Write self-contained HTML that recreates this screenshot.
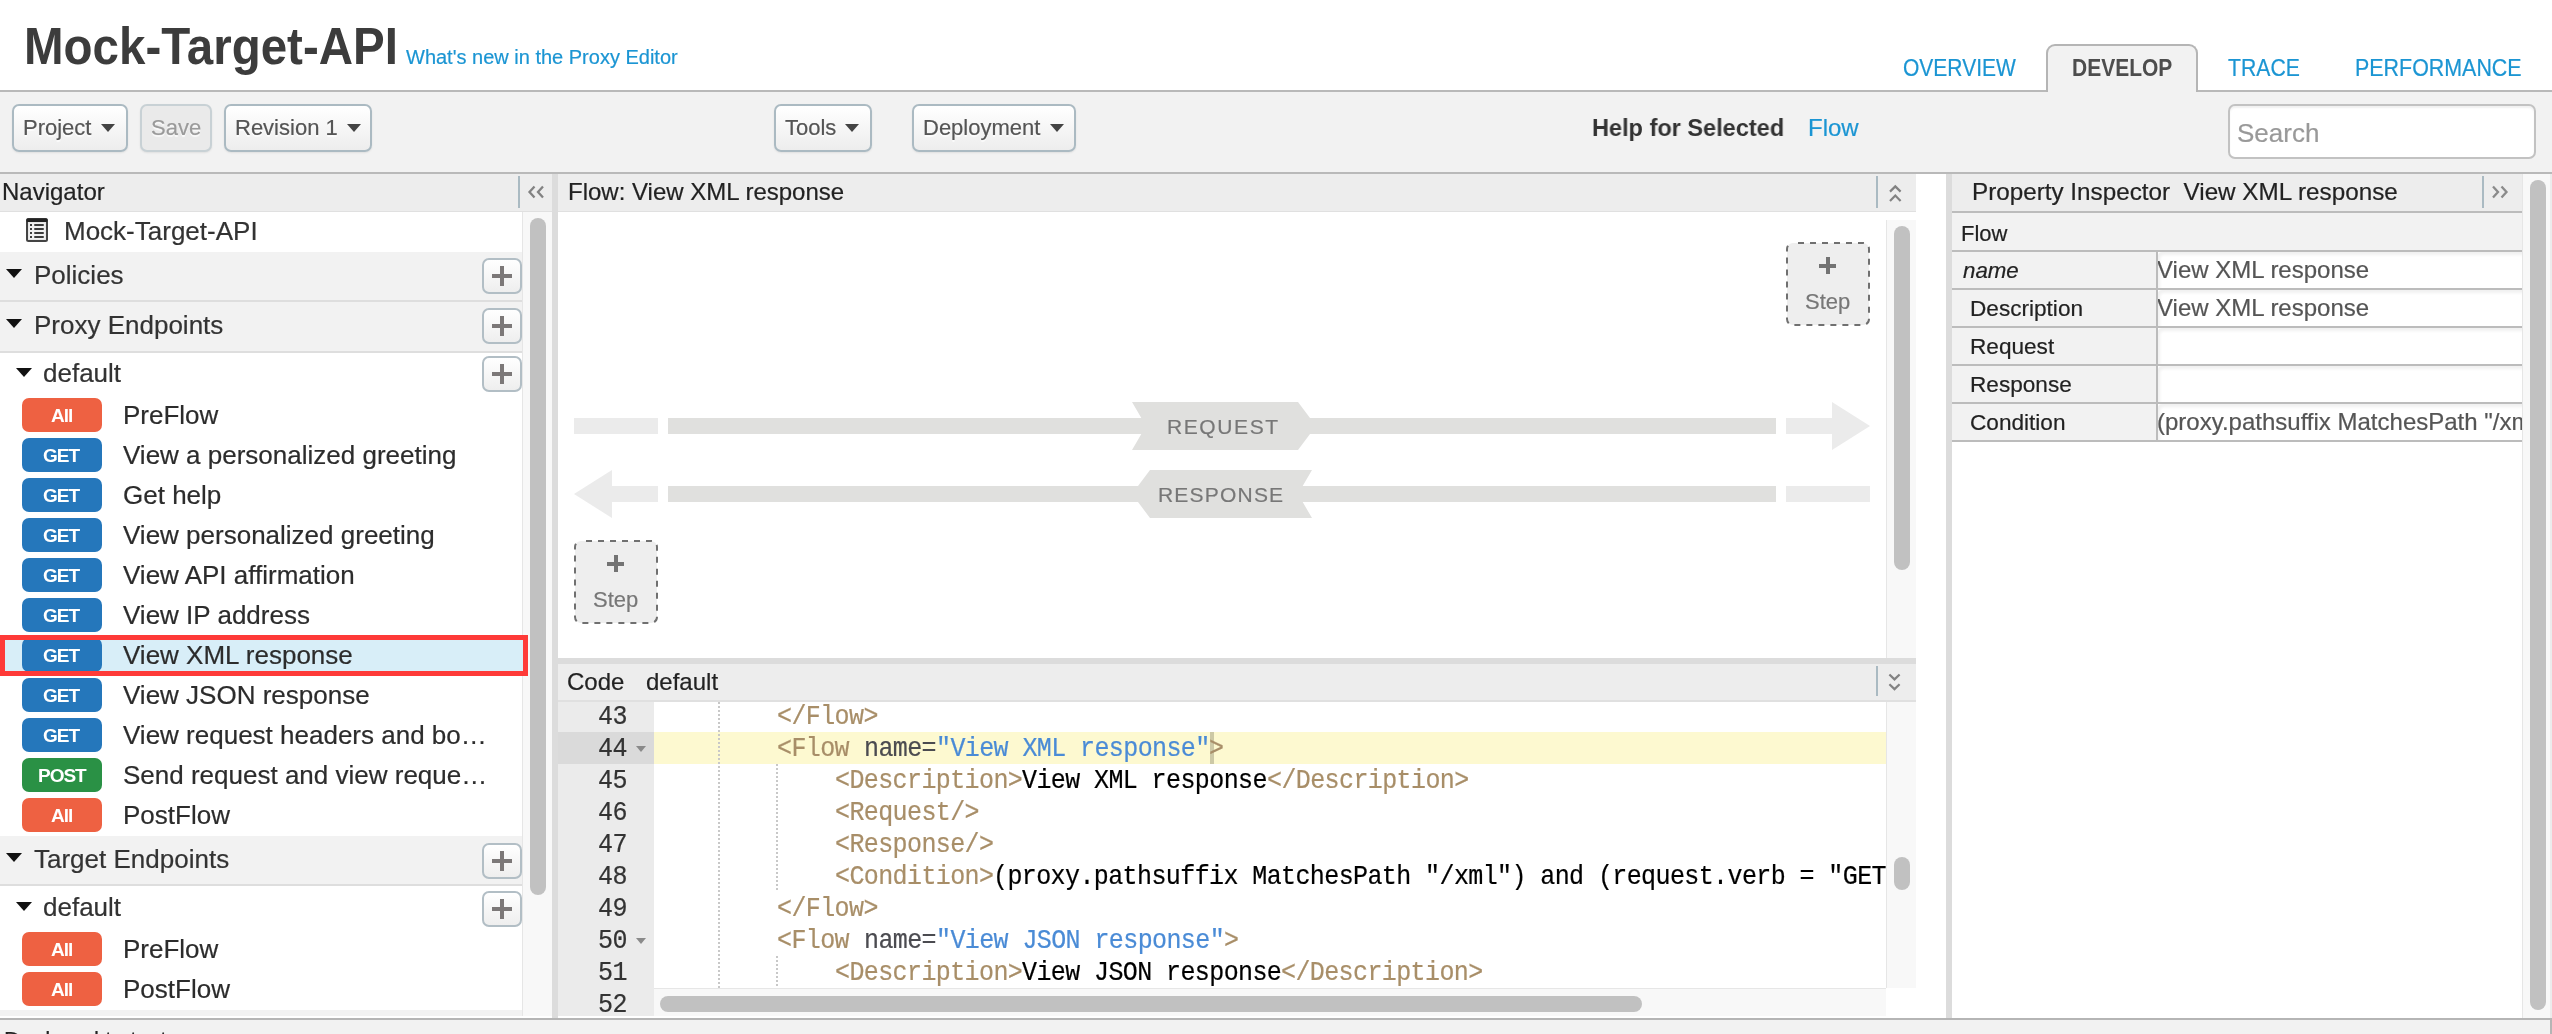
<!DOCTYPE html>
<html><head><meta charset="utf-8"><title>Mock-Target-API</title>
<style>
html,body{margin:0;padding:0;}
body{width:2552px;height:1034px;overflow:hidden;position:relative;background:#fff;font-family:"Liberation Sans", sans-serif;}
.t{position:absolute;white-space:nowrap;will-change:transform;}
.r{position:absolute;}
</style></head><body>
<div class="t" style="left:23.70px;top:16.53px;font-size:47.5px;line-height:62px;color:#3c3c3c;font-family:'Liberation Sans', sans-serif;font-weight:bold;transform:scale(1,1.09);transform-origin:0 47.47px;">Mock-Target-API</div>
<div class="t" style="left:405.70px;top:43.67px;font-size:20px;line-height:26px;color:#1b95d3;font-family:'Liberation Sans', sans-serif;-webkit-text-stroke:0.2px #1b95d3;">What&#x27;s new in the Proxy Editor</div>
<div class="r" style="left:0px;top:90px;width:2552px;height:2px;background:#b9b9b9;"></div>
<div class="r" style="left:2046px;top:44px;width:148px;height:48px;border:2px solid #b5b5b5;border-bottom:none;border-radius:9px 9px 0 0;background:#f2f2f2;"></div>
<div class="t" style="left:1903.40px;top:55.02px;font-size:21px;line-height:27px;color:#1b95d3;font-family:'Liberation Sans', sans-serif;transform:scale(1,1.14);transform-origin:0 20.78px;-webkit-text-stroke:0.2px #1b95d3;">OVERVIEW</div>
<div class="t" style="left:2071.70px;top:55.02px;font-size:21px;line-height:27px;color:#4d4d4d;font-family:'Liberation Sans', sans-serif;font-weight:bold;transform:scale(1,1.14);transform-origin:0 20.78px;">DEVELOP</div>
<div class="t" style="left:2228.20px;top:55.02px;font-size:21px;line-height:27px;color:#1b95d3;font-family:'Liberation Sans', sans-serif;transform:scale(1.01,1.14);transform-origin:0 20.78px;-webkit-text-stroke:0.2px #1b95d3;">TRACE</div>
<div class="t" style="left:2355.20px;top:55.02px;font-size:21px;line-height:27px;color:#1b95d3;font-family:'Liberation Sans', sans-serif;transform:scale(1.02,1.14);transform-origin:0 20.78px;-webkit-text-stroke:0.2px #1b95d3;">PERFORMANCE</div>
<div class="r" style="left:0px;top:92px;width:2552px;height:80px;background:#f2f2f2;"></div>
<div class="r" style="left:0px;top:172px;width:2552px;height:2px;background:#b9b9b9;"></div>
<div class="r" style="left:12px;top:104px;width:112px;height:44px;border:2px solid #abbac2;border-radius:7px;background:linear-gradient(#ffffff,#ededed);box-shadow:0 1px 2px rgba(0,0,0,0.08);"></div><div class="t" style="left:23.20px;top:113.27px;font-size:22px;line-height:29px;color:#555;font-family:'Liberation Sans', sans-serif;-webkit-text-stroke:0.2px #555;text-shadow:0 1.5px 1px rgba(255,255,255,0.8);">Project</div><div class="r" style="left:100.5px;top:124px;width:0;height:0;border-left:7.5px solid transparent;border-right:7.5px solid transparent;border-top:8px solid #444;"></div>
<div class="r" style="left:140px;top:104px;width:68px;height:44px;border:2px solid #c8d1d5;border-radius:7px;background:#eaeaea;box-shadow:0 1px 2px rgba(0,0,0,0.08);"></div><div class="t" style="left:151.20px;top:113.27px;font-size:22px;line-height:29px;color:#9a9a9a;font-family:'Liberation Sans', sans-serif;-webkit-text-stroke:0.2px #9a9a9a;text-shadow:0 1.5px 1px rgba(255,255,255,0.8);">Save</div>
<div class="r" style="left:224px;top:104px;width:144px;height:44px;border:2px solid #abbac2;border-radius:7px;background:linear-gradient(#ffffff,#ededed);box-shadow:0 1px 2px rgba(0,0,0,0.08);"></div><div class="t" style="left:235.20px;top:113.27px;font-size:22px;line-height:29px;color:#555;font-family:'Liberation Sans', sans-serif;-webkit-text-stroke:0.2px #555;text-shadow:0 1.5px 1px rgba(255,255,255,0.8);">Revision 1</div><div class="r" style="left:346.8px;top:124px;width:0;height:0;border-left:7.5px solid transparent;border-right:7.5px solid transparent;border-top:8px solid #444;"></div>
<div class="r" style="left:774px;top:104px;width:94px;height:44px;border:2px solid #abbac2;border-radius:7px;background:linear-gradient(#ffffff,#ededed);box-shadow:0 1px 2px rgba(0,0,0,0.08);"></div><div class="t" style="left:785.20px;top:113.27px;font-size:22px;line-height:29px;color:#555;font-family:'Liberation Sans', sans-serif;-webkit-text-stroke:0.2px #555;text-shadow:0 1.5px 1px rgba(255,255,255,0.8);">Tools</div><div class="r" style="left:845.2px;top:124px;width:0;height:0;border-left:7.5px solid transparent;border-right:7.5px solid transparent;border-top:8px solid #444;"></div>
<div class="r" style="left:912px;top:104px;width:160px;height:44px;border:2px solid #abbac2;border-radius:7px;background:linear-gradient(#ffffff,#ededed);box-shadow:0 1px 2px rgba(0,0,0,0.08);"></div><div class="t" style="left:923.20px;top:113.27px;font-size:22px;line-height:29px;color:#555;font-family:'Liberation Sans', sans-serif;-webkit-text-stroke:0.2px #555;text-shadow:0 1.5px 1px rgba(255,255,255,0.8);">Deployment</div><div class="r" style="left:1049.5px;top:124px;width:0;height:0;border-left:7.5px solid transparent;border-right:7.5px solid transparent;border-top:8px solid #444;"></div>
<div class="t" style="left:1591.90px;top:112.18px;font-size:24px;line-height:31px;color:#333;font-family:'Liberation Sans', sans-serif;font-weight:bold;transform:scale(0.98,1);transform-origin:0 23.82px;">Help for Selected</div>
<div class="t" style="left:1807.70px;top:112.18px;font-size:24px;line-height:31px;color:#1b95d3;font-family:'Liberation Sans', sans-serif;-webkit-text-stroke:0.2px #1b95d3;">Flow</div>
<div class="r" style="left:2228px;top:104px;width:304px;height:51px;border:2px solid #c2c2c2;border-radius:7px;background:#fff;box-shadow:inset 0 2px 2px rgba(0,0,0,0.06);"></div>
<div class="t" style="left:2237.30px;top:115.99px;font-size:26px;line-height:34px;color:#999;font-family:'Liberation Sans', sans-serif;-webkit-text-stroke:0.2px #999;">Search</div>
<div class="r" style="left:0px;top:174px;width:552px;height:37px;background:#ededed;"></div>
<div class="r" style="left:0px;top:211px;width:552px;height:1px;background:#e0e0e0;"></div>
<div class="t" style="left:2.00px;top:176.18px;font-size:24px;line-height:31px;color:#222;font-family:'Liberation Sans', sans-serif;-webkit-text-stroke:0.2px #222;">Navigator</div>
<div class="r" style="left:518px;top:176px;width:2px;height:32px;background:#aabac2;"></div>
<svg class="r" style="left:526px;top:184px" width="22" height="16" viewBox="0 0 22 16"><path d="M8.5 2.5 L3.5 8 L8.5 13.5 M17 2.5 L12 8 L17 13.5" stroke="#828282" stroke-width="2.3" fill="none"/></svg>
<div class="r" style="left:0px;top:212px;width:522px;height:804px;background:#fff;"></div>
<div class="r" style="left:522px;top:212px;width:30px;height:804px;background:#f8f8f8;border-left:1px solid #e6e6e6;box-sizing:border-box;"></div>
<div class="r" style="left:530px;top:218px;width:16px;height:677px;background:#c1c1c1;border-radius:8px;"></div>
<div class="r" style="left:552px;top:174px;width:6px;height:844px;background:#dcdcdc;"></div>
<svg class="r" style="left:26px;top:218px" width="22" height="24" viewBox="0 0 22 24"><rect x="1" y="1" width="20" height="22" rx="1.5" fill="#e6e6e6" stroke="#444" stroke-width="2"/><rect x="3" y="5" width="16" height="16" fill="#f0f0f0"/><rect x="0.5" y="0.5" width="21" height="3.5" rx="1.2" fill="#222"/><g fill="#3c3c3c"><rect x="4" y="6" width="2" height="2"/><rect x="4" y="10" width="2" height="2"/><rect x="4" y="14" width="2" height="2"/><rect x="4" y="18" width="2" height="2"/><rect x="8" y="6" width="10" height="2" rx="1"/><rect x="8" y="10" width="10" height="2" rx="1"/><rect x="8" y="14" width="10" height="2" rx="1"/><rect x="8" y="18" width="10" height="2" rx="1"/></g></svg>
<div class="t" style="left:64.00px;top:214.49px;font-size:26px;line-height:34px;color:#333;font-family:'Liberation Sans', sans-serif;-webkit-text-stroke:0.2px #333;">Mock-Target-API</div>
<div class="r" style="left:0px;top:252px;width:522px;height:48px;background:#f2f2f2;"></div><div class="r" style="left:0px;top:300px;width:522px;height:2px;background:#dedede;"></div><div class="r" style="left:6px;top:269px;width:0;height:0;border-left:8px solid transparent;border-right:8px solid transparent;border-top:9px solid #111;"></div><div class="t" style="left:33.90px;top:257.99px;font-size:26px;line-height:34px;color:#333;font-family:'Liberation Sans', sans-serif;-webkit-text-stroke:0.2px #333;">Policies</div><div class="r" style="left:482px;top:258px;width:36px;height:32px;border:2px solid #b2bec5;border-radius:7px;background:linear-gradient(#fff,#eee);"></div><div class="r" style="left:492px;top:274px;width:20px;height:4px;background:#7c7878;"></div><div class="r" style="left:500px;top:266px;width:4px;height:20px;background:#7c7878;"></div>
<div class="r" style="left:0px;top:302px;width:522px;height:49px;background:#f2f2f2;"></div><div class="r" style="left:0px;top:351px;width:522px;height:2px;background:#dedede;"></div><div class="r" style="left:6px;top:319px;width:0;height:0;border-left:8px solid transparent;border-right:8px solid transparent;border-top:9px solid #111;"></div><div class="t" style="left:33.90px;top:307.99px;font-size:26px;line-height:34px;color:#333;font-family:'Liberation Sans', sans-serif;-webkit-text-stroke:0.2px #333;">Proxy Endpoints</div><div class="r" style="left:482px;top:308px;width:36px;height:32px;border:2px solid #b2bec5;border-radius:7px;background:linear-gradient(#fff,#eee);"></div><div class="r" style="left:492px;top:324px;width:20px;height:4px;background:#7c7878;"></div><div class="r" style="left:500px;top:316px;width:4px;height:20px;background:#7c7878;"></div>
<div class="r" style="left:16px;top:368px;width:0;height:0;border-left:8px solid transparent;border-right:8px solid transparent;border-top:9px solid #111;"></div>
<div class="t" style="left:43.40px;top:355.59px;font-size:26px;line-height:34px;color:#333;font-family:'Liberation Sans', sans-serif;-webkit-text-stroke:0.2px #333;">default</div>
<div class="r" style="left:482px;top:356px;width:36px;height:32px;border:2px solid #b2bec5;border-radius:7px;background:linear-gradient(#fff,#eee);"></div><div class="r" style="left:492px;top:372px;width:20px;height:4px;background:#7c7878;"></div><div class="r" style="left:500px;top:364px;width:4px;height:20px;background:#7c7878;"></div>
<div class="r" style="left:22px;top:398px;width:80px;height:34px;border-radius:7px;background:#ee6142;"></div><div class="t" style="left:50.78px;top:403.21px;font-size:19px;line-height:25px;color:#fff;font-family:'Liberation Sans', sans-serif;font-weight:bold;letter-spacing:-1.0px;">All</div><div class="t" style="left:122.50px;top:398.19px;font-size:26px;line-height:34px;color:#2c2c2c;font-family:'Liberation Sans', sans-serif;-webkit-text-stroke:0.2px #2c2c2c;">PreFlow</div>
<div class="r" style="left:22px;top:438px;width:80px;height:34px;border-radius:7px;background:#2577bb;"></div><div class="t" style="left:43.40px;top:443.21px;font-size:19px;line-height:25px;color:#fff;font-family:'Liberation Sans', sans-serif;font-weight:bold;letter-spacing:-1.0px;">GET</div><div class="t" style="left:122.50px;top:438.19px;font-size:26px;line-height:34px;color:#2c2c2c;font-family:'Liberation Sans', sans-serif;-webkit-text-stroke:0.2px #2c2c2c;">View a personalized greeting</div>
<div class="r" style="left:22px;top:478px;width:80px;height:34px;border-radius:7px;background:#2577bb;"></div><div class="t" style="left:43.40px;top:483.21px;font-size:19px;line-height:25px;color:#fff;font-family:'Liberation Sans', sans-serif;font-weight:bold;letter-spacing:-1.0px;">GET</div><div class="t" style="left:122.50px;top:478.19px;font-size:26px;line-height:34px;color:#2c2c2c;font-family:'Liberation Sans', sans-serif;-webkit-text-stroke:0.2px #2c2c2c;">Get help</div>
<div class="r" style="left:22px;top:518px;width:80px;height:34px;border-radius:7px;background:#2577bb;"></div><div class="t" style="left:43.40px;top:523.21px;font-size:19px;line-height:25px;color:#fff;font-family:'Liberation Sans', sans-serif;font-weight:bold;letter-spacing:-1.0px;">GET</div><div class="t" style="left:122.50px;top:518.19px;font-size:26px;line-height:34px;color:#2c2c2c;font-family:'Liberation Sans', sans-serif;-webkit-text-stroke:0.2px #2c2c2c;">View personalized greeting</div>
<div class="r" style="left:22px;top:558px;width:80px;height:34px;border-radius:7px;background:#2577bb;"></div><div class="t" style="left:43.40px;top:563.21px;font-size:19px;line-height:25px;color:#fff;font-family:'Liberation Sans', sans-serif;font-weight:bold;letter-spacing:-1.0px;">GET</div><div class="t" style="left:122.50px;top:558.19px;font-size:26px;line-height:34px;color:#2c2c2c;font-family:'Liberation Sans', sans-serif;-webkit-text-stroke:0.2px #2c2c2c;">View API affirmation</div>
<div class="r" style="left:22px;top:598px;width:80px;height:34px;border-radius:7px;background:#2577bb;"></div><div class="t" style="left:43.40px;top:603.21px;font-size:19px;line-height:25px;color:#fff;font-family:'Liberation Sans', sans-serif;font-weight:bold;letter-spacing:-1.0px;">GET</div><div class="t" style="left:122.50px;top:598.19px;font-size:26px;line-height:34px;color:#2c2c2c;font-family:'Liberation Sans', sans-serif;-webkit-text-stroke:0.2px #2c2c2c;">View IP address</div>
<div class="r" style="left:0px;top:635px;width:528px;height:41px;background:#d8eef8;"></div><div class="r" style="left:22px;top:638px;width:80px;height:34px;border-radius:7px;background:#2577bb;"></div><div class="t" style="left:43.40px;top:643.21px;font-size:19px;line-height:25px;color:#fff;font-family:'Liberation Sans', sans-serif;font-weight:bold;letter-spacing:-1.0px;">GET</div><div class="t" style="left:122.50px;top:638.19px;font-size:26px;line-height:34px;color:#2c2c2c;font-family:'Liberation Sans', sans-serif;-webkit-text-stroke:0.2px #2c2c2c;">View XML response</div><div class="r" style="left:0px;top:635px;width:528px;height:41px;border:5px solid #fe3a38;box-sizing:border-box;"></div>
<div class="r" style="left:22px;top:678px;width:80px;height:34px;border-radius:7px;background:#2577bb;"></div><div class="t" style="left:43.40px;top:683.21px;font-size:19px;line-height:25px;color:#fff;font-family:'Liberation Sans', sans-serif;font-weight:bold;letter-spacing:-1.0px;">GET</div><div class="t" style="left:122.50px;top:678.19px;font-size:26px;line-height:34px;color:#2c2c2c;font-family:'Liberation Sans', sans-serif;-webkit-text-stroke:0.2px #2c2c2c;">View JSON response</div>
<div class="r" style="left:22px;top:718px;width:80px;height:34px;border-radius:7px;background:#2577bb;"></div><div class="t" style="left:43.40px;top:723.21px;font-size:19px;line-height:25px;color:#fff;font-family:'Liberation Sans', sans-serif;font-weight:bold;letter-spacing:-1.0px;">GET</div><div class="t" style="left:122.50px;top:718.19px;font-size:26px;line-height:34px;color:#2c2c2c;font-family:'Liberation Sans', sans-serif;-webkit-text-stroke:0.2px #2c2c2c;">View request headers and bo…</div>
<div class="r" style="left:22px;top:758px;width:80px;height:34px;border-radius:7px;background:#2a9145;"></div><div class="t" style="left:37.53px;top:763.21px;font-size:19px;line-height:25px;color:#fff;font-family:'Liberation Sans', sans-serif;font-weight:bold;letter-spacing:-1.0px;">POST</div><div class="t" style="left:122.50px;top:758.19px;font-size:26px;line-height:34px;color:#2c2c2c;font-family:'Liberation Sans', sans-serif;-webkit-text-stroke:0.2px #2c2c2c;">Send request and view reque…</div>
<div class="r" style="left:22px;top:798px;width:80px;height:34px;border-radius:7px;background:#ee6142;"></div><div class="t" style="left:50.78px;top:803.21px;font-size:19px;line-height:25px;color:#fff;font-family:'Liberation Sans', sans-serif;font-weight:bold;letter-spacing:-1.0px;">All</div><div class="t" style="left:122.50px;top:798.19px;font-size:26px;line-height:34px;color:#2c2c2c;font-family:'Liberation Sans', sans-serif;-webkit-text-stroke:0.2px #2c2c2c;">PostFlow</div>
<div class="r" style="left:0px;top:836px;width:522px;height:48px;background:#f2f2f2;"></div><div class="r" style="left:0px;top:884px;width:522px;height:2px;background:#dedede;"></div><div class="r" style="left:6px;top:853px;width:0;height:0;border-left:8px solid transparent;border-right:8px solid transparent;border-top:9px solid #111;"></div><div class="t" style="left:33.90px;top:841.99px;font-size:26px;line-height:34px;color:#333;font-family:'Liberation Sans', sans-serif;-webkit-text-stroke:0.2px #333;">Target Endpoints</div><div class="r" style="left:482px;top:843px;width:36px;height:32px;border:2px solid #b2bec5;border-radius:7px;background:linear-gradient(#fff,#eee);"></div><div class="r" style="left:492px;top:859px;width:20px;height:4px;background:#7c7878;"></div><div class="r" style="left:500px;top:851px;width:4px;height:20px;background:#7c7878;"></div>
<div class="r" style="left:16px;top:902px;width:0;height:0;border-left:8px solid transparent;border-right:8px solid transparent;border-top:9px solid #111;"></div>
<div class="t" style="left:43.40px;top:889.59px;font-size:26px;line-height:34px;color:#333;font-family:'Liberation Sans', sans-serif;-webkit-text-stroke:0.2px #333;">default</div>
<div class="r" style="left:482px;top:891px;width:36px;height:32px;border:2px solid #b2bec5;border-radius:7px;background:linear-gradient(#fff,#eee);"></div><div class="r" style="left:492px;top:907px;width:20px;height:4px;background:#7c7878;"></div><div class="r" style="left:500px;top:899px;width:4px;height:20px;background:#7c7878;"></div>
<div class="r" style="left:22px;top:932px;width:80px;height:34px;border-radius:7px;background:#ee6142;"></div><div class="t" style="left:50.78px;top:937.21px;font-size:19px;line-height:25px;color:#fff;font-family:'Liberation Sans', sans-serif;font-weight:bold;letter-spacing:-1.0px;">All</div><div class="t" style="left:122.50px;top:932.19px;font-size:26px;line-height:34px;color:#2c2c2c;font-family:'Liberation Sans', sans-serif;-webkit-text-stroke:0.2px #2c2c2c;">PreFlow</div>
<div class="r" style="left:22px;top:972px;width:80px;height:34px;border-radius:7px;background:#ee6142;"></div><div class="t" style="left:50.78px;top:977.21px;font-size:19px;line-height:25px;color:#fff;font-family:'Liberation Sans', sans-serif;font-weight:bold;letter-spacing:-1.0px;">All</div><div class="t" style="left:122.50px;top:972.19px;font-size:26px;line-height:34px;color:#2c2c2c;font-family:'Liberation Sans', sans-serif;-webkit-text-stroke:0.2px #2c2c2c;">PostFlow</div>
<div class="r" style="left:0px;top:1010px;width:522px;height:6px;background:#f2f2f2;"></div>
<div class="r" style="left:558px;top:174px;width:1358px;height:37px;background:#ededed;"></div>
<div class="r" style="left:558px;top:211px;width:1358px;height:1px;background:#e0e0e0;"></div>
<div class="t" style="left:567.50px;top:176.18px;font-size:24px;line-height:31px;color:#222;font-family:'Liberation Sans', sans-serif;-webkit-text-stroke:0.2px #222;">Flow: View XML response</div>
<div class="r" style="left:1876px;top:176px;width:2px;height:32px;background:#aabac2;"></div>
<svg class="r" style="left:1887px;top:184px" width="16" height="20" viewBox="0 0 16 20"><path d="M3 7.6 L8.3 2.4 L13.6 7.6 M3 17 L8.3 11.6 L13.6 17" stroke="#828282" stroke-width="2.2" fill="none"/></svg>
<div class="r" style="left:1916px;top:174px;width:30px;height:844px;background:#fff;"></div>
<div class="r" style="left:1946px;top:174px;width:6px;height:844px;background:#dcdcdc;"></div>
<div class="r" style="left:558px;top:212px;width:1328px;height:446px;background:#fff;"></div>
<div class="r" style="left:1886px;top:220px;width:30px;height:438px;background:#f8f8f8;border-left:1px solid #e6e6e6;box-sizing:border-box;"></div>
<div class="r" style="left:1894px;top:226px;width:16px;height:344px;background:#c1c1c1;border-radius:8px;"></div>
<svg class="r" style="left:1786px;top:242px" width="84" height="84" viewBox="0 0 84 84"><rect x="1" y="1" width="82" height="82" rx="6" fill="#eeeeee" stroke="#707070" stroke-width="2" stroke-dasharray="6 6" stroke-dashoffset="7"/></svg><div class="r" style="left:1819px;top:264px;width:17px;height:4px;background:#737373;"></div><div class="r" style="left:1825.8px;top:257px;width:4.0px;height:17px;background:#737373;"></div><div class="t" style="left:1805.30px;top:287.47px;font-size:22px;line-height:29px;color:#777;font-family:'Liberation Sans', sans-serif;-webkit-text-stroke:0.2px #777;">Step</div>
<svg class="r" style="left:574px;top:540px" width="84" height="84" viewBox="0 0 84 84"><rect x="1" y="1" width="82" height="82" rx="6" fill="#eeeeee" stroke="#707070" stroke-width="2" stroke-dasharray="6 6" stroke-dashoffset="7"/></svg><div class="r" style="left:607px;top:562px;width:17px;height:4px;background:#737373;"></div><div class="r" style="left:613.8px;top:555px;width:4.0px;height:17px;background:#737373;"></div><div class="t" style="left:593.30px;top:585.47px;font-size:22px;line-height:29px;color:#777;font-family:'Liberation Sans', sans-serif;-webkit-text-stroke:0.2px #777;">Step</div>
<div class="r" style="left:574px;top:418px;width:84px;height:16px;background:#ebebeb;"></div>
<div class="r" style="left:668px;top:418px;width:1108px;height:16px;background:#e0e0de;"></div>
<svg class="r" style="left:1786px;top:400px" width="86" height="52" viewBox="0 0 86 52"><path d="M0 18 H46 V2 L84 26 L46 50 V34 H0 Z" fill="#ebebeb"/></svg>
<svg class="r" style="left:572px;top:468px" width="88" height="52" viewBox="0 0 88 52"><path d="M86 18 H40 V2 L2 26 L40 50 V34 H86 Z" fill="#ebebeb"/></svg>
<div class="r" style="left:668px;top:486px;width:1108px;height:16px;background:#e0e0de;"></div>
<div class="r" style="left:1786px;top:486px;width:84px;height:16px;background:#ebebeb;"></div>
<svg class="r" style="left:1120px;top:400px" width="220" height="124" viewBox="1120 400 220 124"><path d="M1132 402 H1298 L1316 426 L1298 450 H1132 L1146 426 Z" fill="#e0e0de"/><path d="M1150 470 H1312 L1298 494 L1312 518 H1150 L1132 494 Z" fill="#e0e0de"/></svg>
<div class="t" style="left:1166.70px;top:413.42px;font-size:21px;line-height:27px;color:#777;font-family:'Liberation Sans', sans-serif;letter-spacing:1.6px;-webkit-text-stroke:0.2px #777;">REQUEST</div>
<div class="t" style="left:1158.30px;top:481.42px;font-size:21px;line-height:27px;color:#777;font-family:'Liberation Sans', sans-serif;letter-spacing:1.2px;-webkit-text-stroke:0.2px #777;">RESPONSE</div>
<div class="r" style="left:558px;top:658px;width:1358px;height:6px;background:#dcdcdc;"></div>
<div class="r" style="left:558px;top:664px;width:1358px;height:36px;background:#ededed;"></div>
<div class="r" style="left:558px;top:700px;width:1358px;height:2px;background:#e0e0e0;"></div>
<div class="t" style="left:567.30px;top:666.18px;font-size:24px;line-height:31px;color:#222;font-family:'Liberation Sans', sans-serif;-webkit-text-stroke:0.2px #222;">Code</div>
<div class="t" style="left:646.20px;top:666.18px;font-size:24px;line-height:31px;color:#222;font-family:'Liberation Sans', sans-serif;-webkit-text-stroke:0.2px #222;">default</div>
<div class="r" style="left:1876px;top:666px;width:2px;height:30px;background:#aabac2;"></div>
<svg class="r" style="left:1887px;top:672px" width="16" height="20" viewBox="0 0 16 20"><path d="M2.4 2.5 L7.5 7.4 L12.6 2.5 M2.4 12.2 L7.5 17.1 L12.6 12.2" stroke="#828282" stroke-width="2.2" fill="none"/></svg>
<div class="r" style="left:558px;top:702px;width:96px;height:314px;background:#ebebeb;"></div>
<div class="r" style="left:558px;top:732px;width:96px;height:32px;background:#dadada;"></div>
<div class="r" style="left:654px;top:702px;width:1232px;height:286px;background:#fff;"></div>
<div class="r" style="left:654px;top:732px;width:1232px;height:32px;background:#fdf9d0;"></div>
<div class="r" style="left:1210px;top:732px;width:4px;height:32px;background:#cdc9a6;"></div>
<div class="r" style="left:718px;top:702px;width:2px;height:286px;background-image:linear-gradient(#c8c8c8 50%,transparent 50%);background-size:2px 4px;"></div>
<div class="r" style="left:776px;top:764px;width:2px;height:128px;background-image:linear-gradient(#c8c8c8 50%,transparent 50%);background-size:2px 4px;"></div>
<div class="r" style="left:776px;top:956px;width:2px;height:32px;background-image:linear-gradient(#c8c8c8 50%,transparent 50%);background-size:2px 4px;"></div>
<div class="t" style="left:597.90px;top:702.05px;font-size:25px;line-height:32px;color:#333;font-family:'Liberation Mono', monospace;letter-spacing:-0.5999999999999996px;transform:scale(1,1.07);transform-origin:0 22.65px;-webkit-text-stroke:0.2px #333;">43</div>
<div class="t" style="left:597.90px;top:734.05px;font-size:25px;line-height:32px;color:#333;font-family:'Liberation Mono', monospace;letter-spacing:-0.5999999999999996px;transform:scale(1,1.07);transform-origin:0 22.65px;-webkit-text-stroke:0.2px #333;">44</div>
<div class="t" style="left:597.90px;top:766.05px;font-size:25px;line-height:32px;color:#333;font-family:'Liberation Mono', monospace;letter-spacing:-0.5999999999999996px;transform:scale(1,1.07);transform-origin:0 22.65px;-webkit-text-stroke:0.2px #333;">45</div>
<div class="t" style="left:597.90px;top:798.05px;font-size:25px;line-height:32px;color:#333;font-family:'Liberation Mono', monospace;letter-spacing:-0.5999999999999996px;transform:scale(1,1.07);transform-origin:0 22.65px;-webkit-text-stroke:0.2px #333;">46</div>
<div class="t" style="left:597.90px;top:830.05px;font-size:25px;line-height:32px;color:#333;font-family:'Liberation Mono', monospace;letter-spacing:-0.5999999999999996px;transform:scale(1,1.07);transform-origin:0 22.65px;-webkit-text-stroke:0.2px #333;">47</div>
<div class="t" style="left:597.90px;top:862.05px;font-size:25px;line-height:32px;color:#333;font-family:'Liberation Mono', monospace;letter-spacing:-0.5999999999999996px;transform:scale(1,1.07);transform-origin:0 22.65px;-webkit-text-stroke:0.2px #333;">48</div>
<div class="t" style="left:597.90px;top:894.05px;font-size:25px;line-height:32px;color:#333;font-family:'Liberation Mono', monospace;letter-spacing:-0.5999999999999996px;transform:scale(1,1.07);transform-origin:0 22.65px;-webkit-text-stroke:0.2px #333;">49</div>
<div class="t" style="left:597.90px;top:926.05px;font-size:25px;line-height:32px;color:#333;font-family:'Liberation Mono', monospace;letter-spacing:-0.5999999999999996px;transform:scale(1,1.07);transform-origin:0 22.65px;-webkit-text-stroke:0.2px #333;">50</div>
<div class="t" style="left:597.90px;top:958.05px;font-size:25px;line-height:32px;color:#333;font-family:'Liberation Mono', monospace;letter-spacing:-0.5999999999999996px;transform:scale(1,1.07);transform-origin:0 22.65px;-webkit-text-stroke:0.2px #333;">51</div>
<div class="t" style="left:597.90px;top:990.05px;font-size:25px;line-height:32px;color:#333;font-family:'Liberation Mono', monospace;letter-spacing:-0.5999999999999996px;transform:scale(1,1.07);transform-origin:0 22.65px;-webkit-text-stroke:0.2px #333;">52</div>
<div class="r" style="left:0;top:0;width:1886px;height:988px;overflow:hidden;"><div class="t" style="left:777.20px;top:702.05px;font-size:25px;line-height:32px;color:#a88e68;font-family:'Liberation Mono', monospace;letter-spacing:-0.5999999999999996px;transform:scale(1,1.07);transform-origin:0 22.65px;-webkit-text-stroke:0.2px #a88e68;white-space:pre;">&lt;/Flow&gt;</div>
<div class="t" style="left:777.20px;top:734.05px;font-size:25px;line-height:32px;color:#a88e68;font-family:'Liberation Mono', monospace;letter-spacing:-0.5999999999999996px;transform:scale(1,1.07);transform-origin:0 22.65px;-webkit-text-stroke:0.2px #a88e68;white-space:pre;">&lt;Flow</div>
<div class="t" style="left:863.60px;top:734.05px;font-size:25px;line-height:32px;color:#4b4b50;font-family:'Liberation Mono', monospace;letter-spacing:-0.5999999999999996px;transform:scale(1,1.07);transform-origin:0 22.65px;-webkit-text-stroke:0.2px #4b4b50;white-space:pre;">name=</div>
<div class="t" style="left:935.60px;top:734.05px;font-size:25px;line-height:32px;color:#4a8bd6;font-family:'Liberation Mono', monospace;letter-spacing:-0.5999999999999996px;transform:scale(1,1.07);transform-origin:0 22.65px;-webkit-text-stroke:0.2px #4a8bd6;white-space:pre;">&quot;View XML response&quot;</div>
<div class="t" style="left:1209.20px;top:734.05px;font-size:25px;line-height:32px;color:#a88e68;font-family:'Liberation Mono', monospace;letter-spacing:-0.5999999999999996px;transform:scale(1,1.07);transform-origin:0 22.65px;-webkit-text-stroke:0.2px #a88e68;white-space:pre;">&gt;</div>
<div class="t" style="left:834.80px;top:766.05px;font-size:25px;line-height:32px;color:#a88e68;font-family:'Liberation Mono', monospace;letter-spacing:-0.5999999999999996px;transform:scale(1,1.07);transform-origin:0 22.65px;-webkit-text-stroke:0.2px #a88e68;white-space:pre;">&lt;Description&gt;</div>
<div class="t" style="left:1022.00px;top:766.05px;font-size:25px;line-height:32px;color:#000;font-family:'Liberation Mono', monospace;letter-spacing:-0.5999999999999996px;transform:scale(1,1.07);transform-origin:0 22.65px;-webkit-text-stroke:0.2px #000;white-space:pre;">View XML response</div>
<div class="t" style="left:1266.80px;top:766.05px;font-size:25px;line-height:32px;color:#a88e68;font-family:'Liberation Mono', monospace;letter-spacing:-0.5999999999999996px;transform:scale(1,1.07);transform-origin:0 22.65px;-webkit-text-stroke:0.2px #a88e68;white-space:pre;">&lt;/Description&gt;</div>
<div class="t" style="left:834.80px;top:798.05px;font-size:25px;line-height:32px;color:#a88e68;font-family:'Liberation Mono', monospace;letter-spacing:-0.5999999999999996px;transform:scale(1,1.07);transform-origin:0 22.65px;-webkit-text-stroke:0.2px #a88e68;white-space:pre;">&lt;Request/&gt;</div>
<div class="t" style="left:834.80px;top:830.05px;font-size:25px;line-height:32px;color:#a88e68;font-family:'Liberation Mono', monospace;letter-spacing:-0.5999999999999996px;transform:scale(1,1.07);transform-origin:0 22.65px;-webkit-text-stroke:0.2px #a88e68;white-space:pre;">&lt;Response/&gt;</div>
<div class="t" style="left:834.80px;top:862.05px;font-size:25px;line-height:32px;color:#a88e68;font-family:'Liberation Mono', monospace;letter-spacing:-0.5999999999999996px;transform:scale(1,1.07);transform-origin:0 22.65px;-webkit-text-stroke:0.2px #a88e68;white-space:pre;">&lt;Condition&gt;</div>
<div class="t" style="left:993.20px;top:862.05px;font-size:25px;line-height:32px;color:#000;font-family:'Liberation Mono', monospace;letter-spacing:-0.5999999999999996px;transform:scale(1,1.07);transform-origin:0 22.65px;-webkit-text-stroke:0.2px #000;white-space:pre;">(proxy.pathsuffix MatchesPath &quot;/xml&quot;) and (request.verb = &quot;GET&quot;) and (request)</div>
<div class="t" style="left:777.20px;top:894.05px;font-size:25px;line-height:32px;color:#a88e68;font-family:'Liberation Mono', monospace;letter-spacing:-0.5999999999999996px;transform:scale(1,1.07);transform-origin:0 22.65px;-webkit-text-stroke:0.2px #a88e68;white-space:pre;">&lt;/Flow&gt;</div>
<div class="t" style="left:777.20px;top:926.05px;font-size:25px;line-height:32px;color:#a88e68;font-family:'Liberation Mono', monospace;letter-spacing:-0.5999999999999996px;transform:scale(1,1.07);transform-origin:0 22.65px;-webkit-text-stroke:0.2px #a88e68;white-space:pre;">&lt;Flow</div>
<div class="t" style="left:863.60px;top:926.05px;font-size:25px;line-height:32px;color:#4b4b50;font-family:'Liberation Mono', monospace;letter-spacing:-0.5999999999999996px;transform:scale(1,1.07);transform-origin:0 22.65px;-webkit-text-stroke:0.2px #4b4b50;white-space:pre;">name=</div>
<div class="t" style="left:935.60px;top:926.05px;font-size:25px;line-height:32px;color:#4a8bd6;font-family:'Liberation Mono', monospace;letter-spacing:-0.5999999999999996px;transform:scale(1,1.07);transform-origin:0 22.65px;-webkit-text-stroke:0.2px #4a8bd6;white-space:pre;">&quot;View JSON response&quot;</div>
<div class="t" style="left:1223.60px;top:926.05px;font-size:25px;line-height:32px;color:#a88e68;font-family:'Liberation Mono', monospace;letter-spacing:-0.5999999999999996px;transform:scale(1,1.07);transform-origin:0 22.65px;-webkit-text-stroke:0.2px #a88e68;white-space:pre;">&gt;</div>
<div class="t" style="left:834.80px;top:958.05px;font-size:25px;line-height:32px;color:#a88e68;font-family:'Liberation Mono', monospace;letter-spacing:-0.5999999999999996px;transform:scale(1,1.07);transform-origin:0 22.65px;-webkit-text-stroke:0.2px #a88e68;white-space:pre;">&lt;Description&gt;</div>
<div class="t" style="left:1022.00px;top:958.05px;font-size:25px;line-height:32px;color:#000;font-family:'Liberation Mono', monospace;letter-spacing:-0.5999999999999996px;transform:scale(1,1.07);transform-origin:0 22.65px;-webkit-text-stroke:0.2px #000;white-space:pre;">View JSON response</div>
<div class="t" style="left:1281.20px;top:958.05px;font-size:25px;line-height:32px;color:#a88e68;font-family:'Liberation Mono', monospace;letter-spacing:-0.5999999999999996px;transform:scale(1,1.07);transform-origin:0 22.65px;-webkit-text-stroke:0.2px #a88e68;white-space:pre;">&lt;/Description&gt;</div></div>
<div class="r" style="left:636px;top:746px;width:0;height:0;border-left:5px solid transparent;border-right:5px solid transparent;border-top:6px solid #8a8a8a;"></div>
<div class="r" style="left:636px;top:938px;width:0;height:0;border-left:5px solid transparent;border-right:5px solid transparent;border-top:6px solid #8a8a8a;"></div>
<div class="r" style="left:1886px;top:702px;width:30px;height:286px;background:#f8f8f8;border-left:1px solid #e6e6e6;box-sizing:border-box;"></div>
<div class="r" style="left:1894px;top:857px;width:16px;height:33px;background:#c1c1c1;border-radius:8px;"></div>
<div class="r" style="left:654px;top:988px;width:1232px;height:28px;background:#f8f8f8;border-top:1px solid #e6e6e6;box-sizing:border-box;"></div>
<div class="r" style="left:660px;top:996px;width:982px;height:16px;background:#c1c1c1;border-radius:8px;"></div>
<div class="r" style="left:1952px;top:174px;width:570px;height:842px;background:#fff;"></div>
<div class="r" style="left:1952px;top:174px;width:570px;height:37px;background:#ededed;"></div>
<div class="r" style="left:1952px;top:211px;width:570px;height:2px;background:#bcbcbc;"></div>
<div class="t" style="left:1972.20px;top:176.18px;font-size:24px;line-height:31px;color:#222;font-family:'Liberation Sans', sans-serif;transform:scale(1.01,1);transform-origin:0 23.82px;-webkit-text-stroke:0.2px #222;white-space:pre;">Property Inspector  View XML response</div>
<div class="r" style="left:2482px;top:176px;width:2px;height:32px;background:#aabac2;"></div>
<svg class="r" style="left:2490px;top:184px" width="20" height="16" viewBox="0 0 20 16"><path d="M3 2.5 L8 8 L3 13.5 M11.5 2.5 L16.5 8 L11.5 13.5" stroke="#8a8a8a" stroke-width="2.3" fill="none"/></svg>
<div class="r" style="left:2522px;top:174px;width:30px;height:844px;background:#f8f8f8;border-left:1px solid #e6e6e6;border-right:2px solid #ececec;box-sizing:border-box;"></div>
<div class="r" style="left:2530px;top:180px;width:16px;height:830px;background:#c1c1c1;border-radius:8px;"></div>
<div class="r" style="left:1952px;top:213px;width:570px;height:37px;background:#f2f2f2;"></div>
<div class="r" style="left:1952px;top:250px;width:570px;height:2px;background:#bcbcbc;"></div>
<div class="t" style="left:1960.70px;top:218.87px;font-size:22px;line-height:29px;color:#222;font-family:'Liberation Sans', sans-serif;-webkit-text-stroke:0.2px #222;">Flow</div>
<div class="r" style="left:1952px;top:252px;width:204px;height:36px;background:#f2f2f2;"></div>
<div class="r" style="left:2156px;top:252px;width:2px;height:36px;background:#bcbcbc;"></div>
<div class="r" style="left:2158px;top:252px;width:364px;height:36px;background:#fff;box-shadow:inset 2px 3px 3px rgba(0,0,0,0.06);border-top-left-radius:4px;"></div>
<div class="r" style="left:1952px;top:288px;width:570px;height:2px;background:#bcbcbc;"></div>
<div class="t" style="left:1963.20px;top:255.77px;font-size:22.3px;line-height:29px;color:#222;font-family:'Liberation Sans', sans-serif;font-style:italic;-webkit-text-stroke:0.2px #222;">name</div>
<div class="r" style="left:2158px;top:252px;width:364px;height:36px;overflow:hidden;"><div class="t" style="left:-0.80px;top:2.18px;font-size:24px;line-height:31px;color:#555;font-family:'Liberation Sans', sans-serif;-webkit-text-stroke:0.2px #555;white-space:pre;">View XML response</div></div>
<div class="r" style="left:1952px;top:290px;width:204px;height:36px;background:#f2f2f2;"></div>
<div class="r" style="left:2156px;top:290px;width:2px;height:36px;background:#bcbcbc;"></div>
<div class="r" style="left:2158px;top:290px;width:364px;height:36px;background:#fff;box-shadow:inset 2px 3px 3px rgba(0,0,0,0.06);border-top-left-radius:4px;"></div>
<div class="r" style="left:1952px;top:326px;width:570px;height:2px;background:#bcbcbc;"></div>
<div class="t" style="left:1969.70px;top:293.67px;font-size:22.6px;line-height:29px;color:#222;font-family:'Liberation Sans', sans-serif;-webkit-text-stroke:0.2px #222;">Description</div>
<div class="r" style="left:2158px;top:290px;width:364px;height:36px;overflow:hidden;"><div class="t" style="left:-0.80px;top:2.18px;font-size:24px;line-height:31px;color:#555;font-family:'Liberation Sans', sans-serif;-webkit-text-stroke:0.2px #555;white-space:pre;">View XML response</div></div>
<div class="r" style="left:1952px;top:328px;width:204px;height:36px;background:#f2f2f2;"></div>
<div class="r" style="left:2156px;top:328px;width:2px;height:36px;background:#bcbcbc;"></div>
<div class="r" style="left:2158px;top:328px;width:364px;height:36px;background:#fff;box-shadow:inset 2px 3px 3px rgba(0,0,0,0.06);border-top-left-radius:4px;"></div>
<div class="r" style="left:1952px;top:364px;width:570px;height:2px;background:#bcbcbc;"></div>
<div class="t" style="left:1969.70px;top:331.67px;font-size:22.6px;line-height:29px;color:#222;font-family:'Liberation Sans', sans-serif;-webkit-text-stroke:0.2px #222;">Request</div>
<div class="r" style="left:1952px;top:366px;width:204px;height:36px;background:#f2f2f2;"></div>
<div class="r" style="left:2156px;top:366px;width:2px;height:36px;background:#bcbcbc;"></div>
<div class="r" style="left:2158px;top:366px;width:364px;height:36px;background:#fff;box-shadow:inset 2px 3px 3px rgba(0,0,0,0.06);border-top-left-radius:4px;"></div>
<div class="r" style="left:1952px;top:402px;width:570px;height:2px;background:#bcbcbc;"></div>
<div class="t" style="left:1969.70px;top:369.67px;font-size:22.6px;line-height:29px;color:#222;font-family:'Liberation Sans', sans-serif;-webkit-text-stroke:0.2px #222;">Response</div>
<div class="r" style="left:1952px;top:404px;width:204px;height:36px;background:#f2f2f2;"></div>
<div class="r" style="left:2156px;top:404px;width:2px;height:36px;background:#bcbcbc;"></div>
<div class="r" style="left:2158px;top:404px;width:364px;height:36px;background:#fff;box-shadow:inset 2px 3px 3px rgba(0,0,0,0.06);border-top-left-radius:4px;"></div>
<div class="r" style="left:1952px;top:440px;width:570px;height:2px;background:#bcbcbc;"></div>
<div class="t" style="left:1969.70px;top:407.67px;font-size:22.6px;line-height:29px;color:#222;font-family:'Liberation Sans', sans-serif;-webkit-text-stroke:0.2px #222;">Condition</div>
<div class="r" style="left:2158px;top:404px;width:364px;height:36px;overflow:hidden;"><div class="t" style="left:-0.80px;top:2.18px;font-size:24px;line-height:31px;color:#555;font-family:'Liberation Sans', sans-serif;-webkit-text-stroke:0.2px #555;white-space:pre;">(proxy.pathsuffix MatchesPath &quot;/xml&quot;) and (request.verb</div></div>
<div class="r" style="left:0px;top:1018px;width:2552px;height:2px;background:#b5b5b5;"></div><div class="r" style="left:0px;top:1020px;width:2552px;height:14px;background:#f2f2f2;"></div><div class="r" style="left:2550px;top:1018px;width:2px;height:16px;background:#b5b5b5;"></div><div class="t" style="left:3.90px;top:1024.70px;font-size:22.5px;line-height:29px;color:#222;font-family:'Liberation Sans', sans-serif;-webkit-text-stroke:0.2px #222;">Deployed to test</div>
</body></html>
